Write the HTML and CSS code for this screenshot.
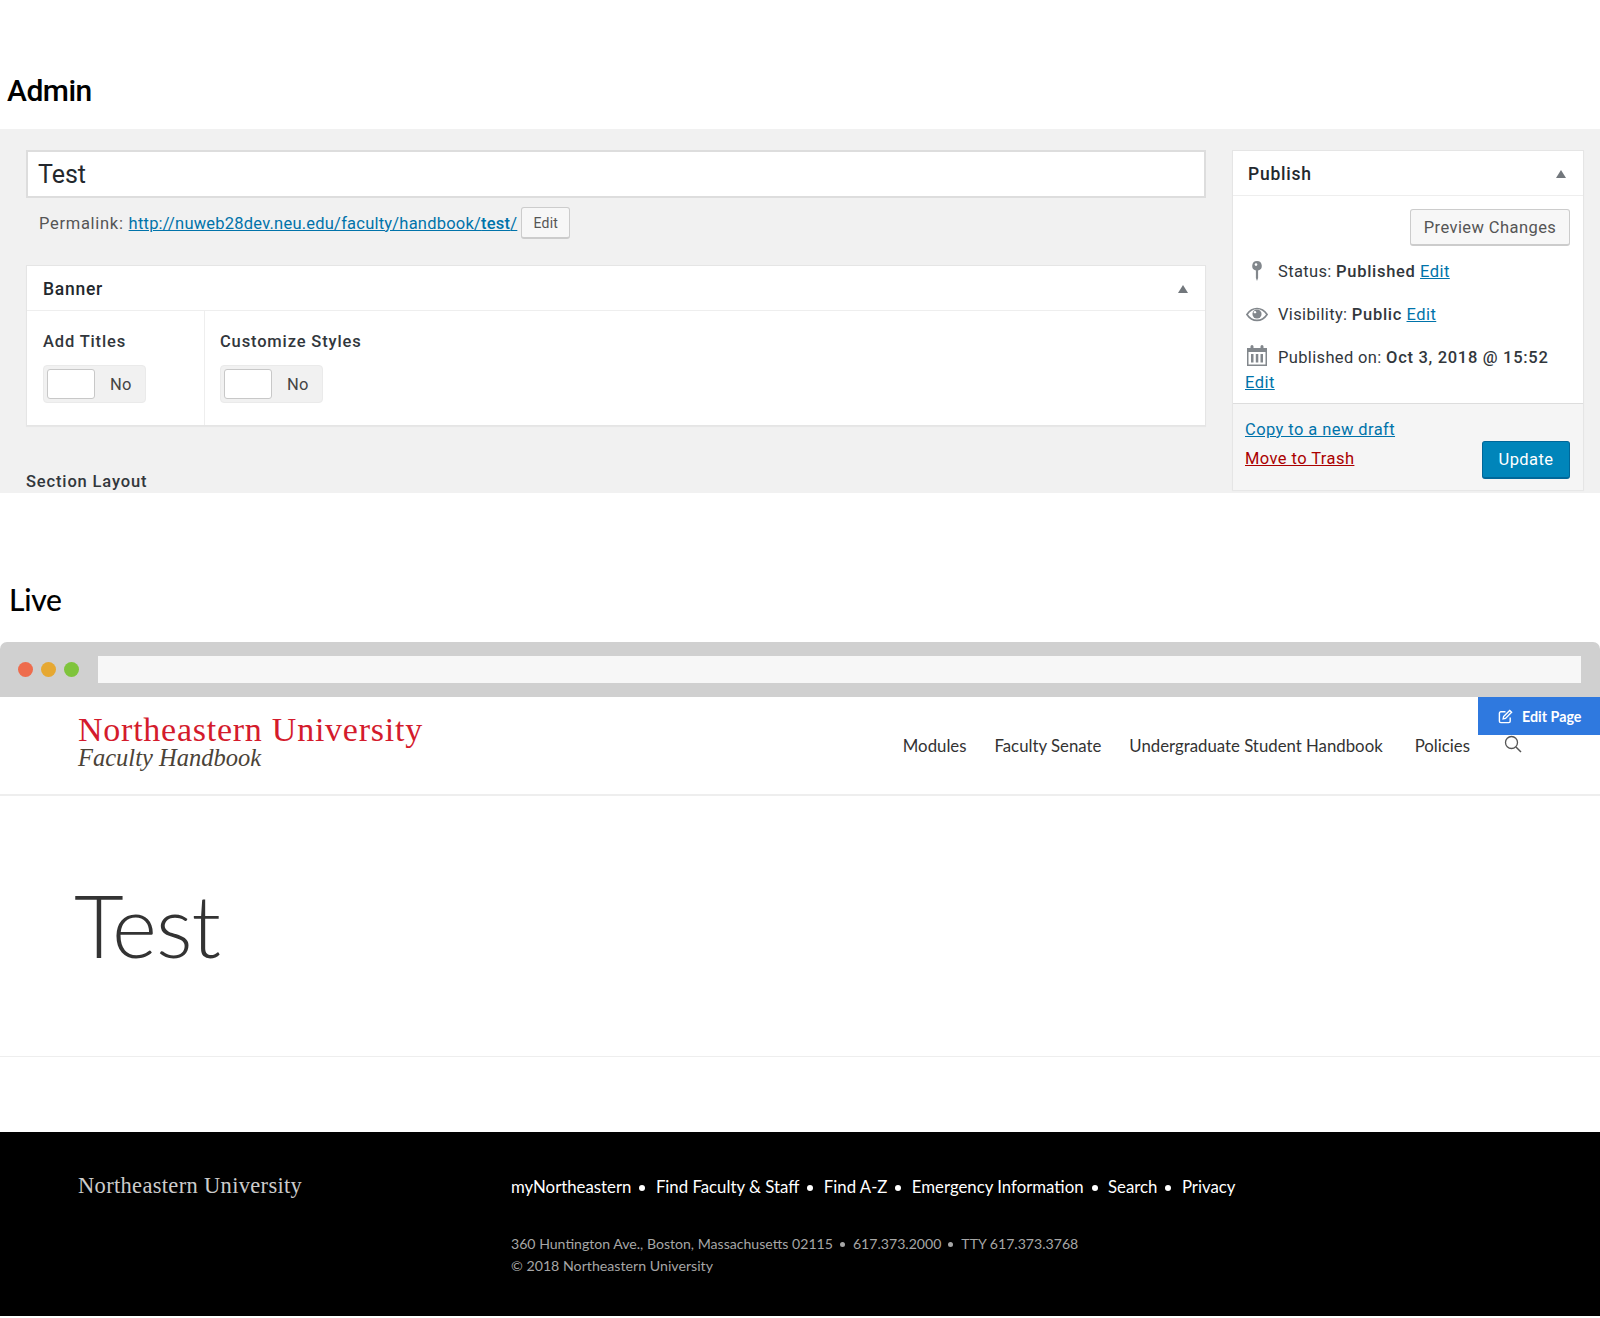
FILE: index.html
```html
<!DOCTYPE html>
<html lang="en">
<head>
    <meta charset="UTF-8">
    <meta name="viewport" content="width=device-width, initial-scale=1.0">
    <title>Admin and Live</title>
    <link rel="stylesheet" href="styles.css">
</head>
<body>
    <h2 class="heading heading-admin">Admin</h2>

    <section class="admin">
        <div class="admin-main">
            <div class="title-input">Test</div>
            <div class="permalink">
                <span class="permalink-label">Permalink:</span>
                <a href="#">http://nuweb28dev.neu.edu/faculty/handbook/<b>test</b>/</a>
                <span class="btn-small">Edit</span>
            </div>
            <div class="box banner">
                <div class="box-head">
                    <span>Banner</span>
                    <span class="arrow"></span>
                </div>
                <div class="banner-body">
                    <div class="field field-first">
                        <div class="field-label">Add Titles</div>
                        <div class="toggle"><span class="toggle-knob"></span><span class="toggle-text">No</span></div>
                    </div>
                    <div class="field">
                        <div class="field-label">Customize Styles</div>
                        <div class="toggle"><span class="toggle-knob"></span><span class="toggle-text">No</span></div>
                    </div>
                </div>
            </div>
            <div class="section-label">Section Layout</div>
        </div>

        <aside class="box publish">
            <div class="box-head publish-head">
                <span>Publish</span>
                <span class="arrow"></span>
            </div>
            <div class="publish-body">
                <div class="preview-row"><span class="btn-preview">Preview Changes</span></div>
                <div class="meta meta-status">
                    <svg class="meta-icon" viewBox="0 0 22 22"><path d="M11 1a4.800 4.800 0 0 1 1.100 9.470V18L11 21l-1.100-3v-7.530A4.800 4.800 0 0 1 11 1z" fill="#82878c"/><circle cx="10" cy="4.600" r="1.300" fill="#fff"/></svg>
                    <span>Status: <b>Published</b> <a href="#">Edit</a></span>
                </div>
                <div class="meta meta-visibility">
                    <svg class="meta-icon" viewBox="0 0 24 20"><path d="M1 10.500C4 6 8 4 12 4s8 2 11 6.500C20 15 16 17 12 17S4 15 1 10.500z" fill="none" stroke="#82878c" stroke-width="1.800"/><circle cx="12" cy="10" r="5" fill="#82878c"/><circle cx="9.800" cy="8" r="1.300" fill="#fff"/></svg>
                    <span>Visibility: <b>Public</b> <a href="#">Edit</a></span>
                </div>
                <div class="meta meta-date">
                    <svg class="meta-icon icon-date" viewBox="0 0 22 22"><path d="M1 4h3.500V2.500a1.500 1.500 0 0 1 3 0V4h7V2.500a1.500 1.500 0 0 1 3 0V4H21v18H1zM2.500 8v12.500h17V8zM5 10h2.500v8.500H5zM9.800 10h2.500v8.500H9.800zM14.500 10H17v8.500h-2.500z" fill="#82878c" fill-rule="evenodd"/></svg>
                    <span>Published on: <b>Oct 3, 2018 @ 15:52</b></span>
                </div>
                <a class="date-edit" href="#">Edit</a>
            </div>
            <div class="publish-foot">
                <div class="publish-links">
                    <a href="#">Copy to a new draft</a>
                    <a class="trash" href="#">Move to Trash</a>
                </div>
                <span class="btn-update">Update</span>
            </div>
        </aside>
    </section>

    <h2 class="heading heading-live">Live</h2>

    <div class="browser-bar">
        <span class="dot dot-red"></span>
        <span class="dot dot-yellow"></span>
        <span class="dot dot-green"></span>
        <span class="address"></span>
    </div>

    <header class="site-header">
        <div class="logo">
            <div class="logo-name">Northeastern University</div>
            <div class="logo-sub">Faculty Handbook</div>
        </div>
        <nav class="nav">
            <a href="#">Modules</a>
            <a href="#">Faculty Senate</a>
            <a href="#">Undergraduate Student Handbook</a>
            <a class="nav-last" href="#">Policies</a>
            <svg class="search" viewBox="0 0 18 18"><circle cx="7.500" cy="7.500" r="6" fill="none" stroke="#555" stroke-width="1.300"/><path d="M12 12l5 5" stroke="#555" stroke-width="1.500"/></svg>
        </nav>
        <a class="edit-page" href="#">
            <svg viewBox="0 0 16 16"><path d="M8 3H3a1.500 1.500 0 0 0-1.500 1.500v8.500A1.500 1.500 0 0 0 3 14.500h8.500A1.500 1.500 0 0 0 13 13V9" fill="none" stroke="#fff" stroke-width="1.500"/><path d="M6 8l6.500-6.500 2 2L8 10l-2.500.5z" fill="none" stroke="#fff" stroke-width="1.500"/></svg>
            <span>Edit Page</span>
        </a>
    </header>

    <main class="hero">
        <h1>Test</h1>
    </main>

    <footer class="footer">
        <div class="footer-logo">Northeastern University</div>
        <div class="footer-info">
            <div class="footer-links">
                <a href="#">myNortheastern</a><i></i>
                <a href="#">Find Faculty &amp; Staff</a><i></i>
                <a href="#">Find A-Z</a><i></i>
                <a href="#">Emergency Information</a><i></i>
                <a href="#">Search</a><i></i>
                <a href="#">Privacy</a>
            </div>
            <div class="footer-address">
                360 Huntington Ave., Boston, Massachusetts 02115<i></i>617.373.2000<i></i>TTY 617.373.3768
            </div>
            <div class="footer-copy">© 2018 Northeastern University</div>
        </div>
    </footer>
</body>
</html>
```

FILE: styles.css
```css
* { box-sizing: border-box; }
body { margin: 0; background: #fff; font-family: Roboto, Arial, sans-serif; color: #32373c; }
a { color: #0073aa; }
h1, h2 { margin: 0; }

.heading { color: #000; font-size: 30px; line-height: 36px; font-weight: 500; }
.heading-admin { height: 129px; padding: 73px 0 0 7px; font-family: Roboto, sans-serif; font-weight: 500; letter-spacing: -0.5px; }
.heading-live { height: 149px; padding: 88px 0 0 9px; font-family: Lato, sans-serif; font-weight: 500; letter-spacing: -0.3px; }

/* admin */
.admin { display: flex; height: 364px; padding: 21px 16px 0 26px; gap: 26px; background: #f1f1f1; overflow: hidden; font-size: 16.500px; letter-spacing: 0.35px; }
.admin-main { width: 1180px; }
.title-input { height: 48px; padding: 0 10px; border: 2px solid #ddd; background: #fff; color: #23282d; font-size: 25px; line-height: 45px; letter-spacing: 0; }
.permalink { display: flex; align-items: center; height: 32px; margin-top: 9px; padding-left: 13px; color: #555; white-space: pre; }
.permalink a { margin-left: 5px; letter-spacing: 0.22px; }
.permalink b { font-weight: 500; }
.permalink-label { letter-spacing: 0.7px; }
.btn-small { width: 49px; height: 32px; margin-left: 4px; border: 1px solid #ccc; border-bottom-width: 2px; border-radius: 3px; background: #f7f7f7; color: #555; font-size: 14px; line-height: 31px; letter-spacing: 0.2px; text-align: center; }

.box { border: 1px solid #e5e5e5; background: #fff; box-shadow: 0 1px 1px rgba(0, 0, 0, .04); }
.box-head { display: flex; justify-content: space-between; align-items: center; height: 45px; padding: 2px 17px 0 16px; border-bottom: 1px solid #eee; color: #23282d; font-size: 17.500px; font-weight: 500; letter-spacing: 0.75px; }
.arrow { width: 0; height: 0; border: 5px solid transparent; border-top: 0; border-bottom: 8px solid #72777c; }

.banner { height: 161px; margin-top: 26px; }
.banner-body { display: flex; height: 114px; }
.field { padding: 21px 16px 0 15px; }
.field-first { width: 178px; border-right: 1px solid #eee; padding-left: 16px; }
.field-label { color: #32373c; font-size: 16.500px; font-weight: 500; line-height: 20px; letter-spacing: 0.85px; }
.toggle { display: flex; align-items: center; width: 103px; height: 38px; margin-top: 13px; padding: 3px; border-radius: 4px; background: #f1f1f1; border: 1px solid #eaeaea; }
.toggle-knob { width: 48px; height: 30px; border: 1px solid #c8c8c8; border-radius: 3px; background: #fff; }
.toggle-text { margin-left: 15px; color: #444; }
.section-label { margin-top: 46px; font-weight: 500; color: #32373c; line-height: 20px; letter-spacing: 0.85px; }

/* publish box */
.publish { flex: none; width: 352px; height: 340px; }
.publish-head { height: 45px; padding-left: 15px; }
.publish-body { height: 207px; padding: 13px 12px 0 12px; }
.preview-row { display: flex; justify-content: flex-end; margin-right: 1px; }
.btn-preview { width: 160px; height: 37px; border: 1px solid #ccc; border-bottom-width: 2px; border-radius: 3px; background: #f7f7f7; color: #555; line-height: 35px; letter-spacing: 0.42px; text-align: center; }
.meta { display: flex; align-items: center; height: 24px; padding-left: 33px; position: relative; white-space: pre; }
.meta b { font-weight: 500; letter-spacing: 0.7px; }
.meta a { letter-spacing: 0.45px; }
.meta-status { margin-top: 13px; }
.meta-visibility { margin-top: 19px; }
.meta-date { margin-top: 19px; }
.meta-icon { position: absolute; left: 1px; width: 22px; height: 22px; }
.icon-date { top: -1px; }
.date-edit { display: block; margin-top: 2px; line-height: 24px; letter-spacing: 0.45px; }
.publish-foot { display: flex; justify-content: space-between; height: 87px; padding: 15px 13px 0 12px; border-top: 1px solid #ddd; background: #f5f5f5; }
.publish-links { display: flex; flex-direction: column; gap: 7px; line-height: 22px; letter-spacing: 0.42px; }
.trash { color: #a00; }
.btn-update { align-self: flex-start; width: 88px; height: 38px; margin-top: 22px; border: 1px solid #006799; border-bottom-width: 2px; border-radius: 3px; background: #0085ba; color: #fff; line-height: 35px; letter-spacing: 0.42px; text-align: center; }

/* browser chrome */
.browser-bar { display: flex; align-items: center; height: 55px; padding: 0 19px 0 18px; gap: 8px; border-radius: 7px 7px 0 0; background: #d0d0d0; }
.dot { width: 15px; height: 15px; border-radius: 50%; }
.dot-red { background: #ee6c4d; }
.dot-yellow { background: #e6a832; }
.dot-green { background: #7fc43c; }
.address { flex: 1; height: 27px; margin-left: 11px; background: #f7f7f7; }

/* site */
.site-header { display: flex; justify-content: space-between; position: relative; height: 99px; padding: 16px 78px 0; border-bottom: 2px solid #eee; font-family: Lato, sans-serif; }
.logo-name { color: #d41b2c; font-family: "Liberation Serif", serif; font-size: 34px; line-height: 34px; letter-spacing: 0.75px; }
.logo-sub { color: #4b4338; font-family: "Liberation Serif", serif; font-style: italic; font-size: 24.500px; line-height: 22px; }
.nav { display: flex; align-items: center; gap: 28px; height: 64px; font-size: 16.800px; }
.nav a { color: #333; text-decoration: none; }
.nav .nav-last { margin-left: 4px; }
.search { width: 18px; height: 18px; margin: -2px 0 0 6px; }
.edit-page { display: flex; align-items: center; gap: 9px; position: absolute; top: 0; right: 0; width: 122px; height: 38px; padding-left: 20px; background: #2f79df; color: #fff; font-size: 14.300px; font-weight: 700; text-decoration: none; }
.edit-page svg { width: 15px; height: 15px; }

.hero { height: 261px; padding: 79px 0 0 74px; border-bottom: 1px solid #eee; font-family: Lato, sans-serif; }
.hero h1 { color: #333; font-size: 86px; font-weight: 300; line-height: 100px; letter-spacing: -1px; }

.footer { display: flex; height: 184px; margin-top: 75px; padding: 41px 0 0 78px; background: #000; color: #fff; font-family: Lato, sans-serif; }
.footer-logo { width: 433px; margin-top: -1px; color: #ccc; font-family: "Liberation Serif", serif; font-size: 22.500px; line-height: 28px; letter-spacing: 0.32px; }
.footer i { display: inline-block; width: 6px; height: 6px; margin: 0 6.200px 2px 8px; border-radius: 50%; background: currentColor; }
.footer-links { font-size: 16.800px; line-height: 28px; white-space: nowrap; }
.footer-links a { color: #fff; text-decoration: none; }
.footer-address { margin-top: 31px; color: #a6a6a6; font-size: 14.100px; line-height: 23px; }
.footer-address i { width: 5px; height: 5px; margin: 0 8px 2px 7px; }
.footer-copy { color: #a6a6a6; font-size: 14.200px; line-height: 22px; }
```
